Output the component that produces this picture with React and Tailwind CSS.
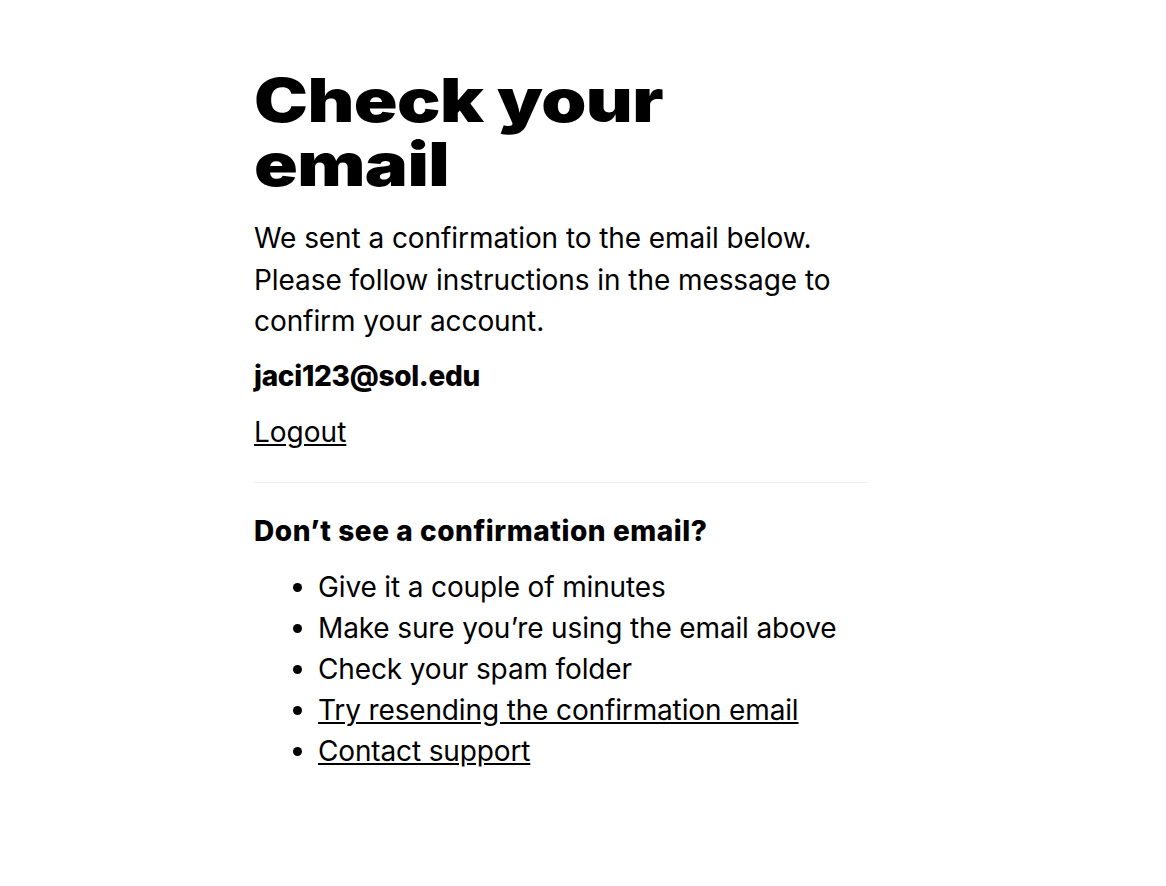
export default function App() {
  return (
    <div className="min-h-[886px] bg-white text-black font-['Inter',sans-serif]">
      <div className="w-[614px] ml-[254px] pt-[68px]">
        <h1 className="text-[60px] leading-[64px] font-black origin-left scale-x-[1.205] tracking-[-0.5px]">
          Check your<br />email
        </h1>
        <p className="mt-[22px] text-[28px] leading-[41.5px] tracking-[-0.07px]">
          We sent a confirmation to the email below. Please follow instructions in the message to confirm your account.
        </p>
        <p className="mt-[13px] text-[28px] leading-[41px] font-extrabold tracking-[-0.28px]">jaci123@sol.edu</p>
        <a className="block mt-[15px] text-[28px] leading-[41px] underline" href="#">Logout</a>
        <hr className="mt-[29px] border-t border-[#eeeeee]" />
        <h2 className="mt-[28px] text-[28px] leading-[41px] font-extrabold tracking-[0.56px]">Don’t see a confirmation email?</h2>
        <ul className="mt-[15px] pl-[64px] list-disc text-[28px] leading-[41px] tracking-[-0.14px]">
          <li>Give it a couple of minutes</li>
          <li>Make sure you’re using the email above</li>
          <li>Check your spam folder</li>
          <li><a className="underline" href="#">Try resending the confirmation email</a></li>
          <li><a className="underline" href="#">Contact support</a></li>
        </ul>
      </div>
    </div>
  );
}
